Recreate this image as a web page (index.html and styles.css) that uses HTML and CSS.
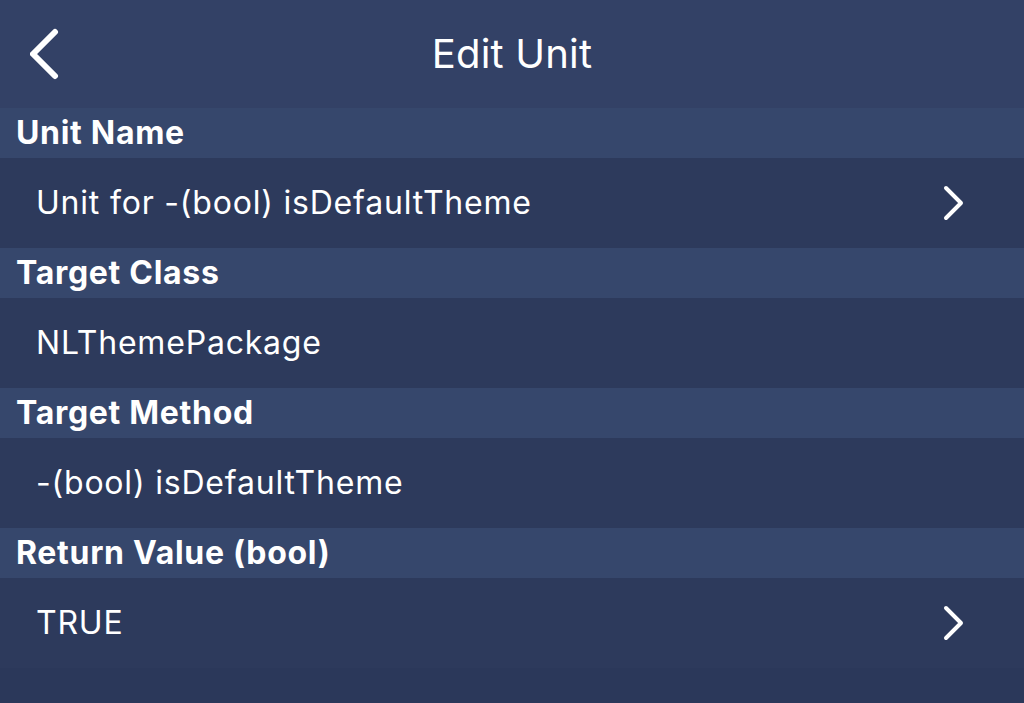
FILE: index.html
```html
<!DOCTYPE html>
<html>
<head>
<meta charset="utf-8">
<link rel="stylesheet" href="styles.css">
</head>
<body>
<div class="screen">
  <header class="nav">
    <svg class="back" width="40" height="60" viewBox="0 0 40 60"><path d="M25 4 L3 26 L25 48" fill="none" stroke="#fff" stroke-width="6" stroke-linecap="round" stroke-linejoin="round"/></svg>
    <h1 class="title">Edit Unit</h1>
  </header>
  <div class="section">Unit Name</div>
  <div class="row"><span>Unit for -(bool) isDefaultTheme</span>
    <svg class="chev" width="24" height="36" viewBox="0 0 24 36"><path d="M4 3 L19 18 L4 33" fill="none" stroke="#fff" stroke-width="4" stroke-linecap="round" stroke-linejoin="round"/></svg>
  </div>
  <div class="section">Target Class</div>
  <div class="row"><span>NLThemePackage</span></div>
  <div class="section">Target Method</div>
  <div class="row"><span>-(bool) isDefaultTheme</span></div>
  <div class="section">Return Value (bool)</div>
  <div class="row"><span>TRUE</span>
    <svg class="chev" width="24" height="36" viewBox="0 0 24 36"><path d="M4 3 L19 18 L4 33" fill="none" stroke="#fff" stroke-width="4" stroke-linecap="round" stroke-linejoin="round"/></svg>
  </div>
  <div class="rest"></div>
</div>
</body>
</html>
```
FILE: styles.css
```css
html, body {
  margin: 0;
  padding: 0;
  background: #2b385a;
}
.screen {
  width: 1024px;
  height: 703px;
  display: flex;
  flex-direction: column;
  font-family: Inter, "Liberation Sans", sans-serif;
  color: #fff;
  overflow: hidden;
}
.nav {
  height: 108px;
  flex: none;
  background: #334166;
  display: flex;
  align-items: center;
  justify-content: center;
  position: relative;
}
.back {
  position: absolute;
  left: 30px;
  top: 28px;
}
.title {
  margin: 0;
  font-weight: 400;
  font-size: 40px;
  letter-spacing: 0.2px;
  padding-bottom: 2px;
}
.section {
  height: 50px;
  flex: none;
  background: #36476c;
  display: flex;
  align-items: center;
  padding-left: 16px;
  font-weight: 700;
  font-size: 32px;
  letter-spacing: 0.7px;
  box-sizing: border-box;
  padding-bottom: 2px;
}
.row {
  height: 90px;
  flex: none;
  background: #2d3a5c;
  display: flex;
  align-items: center;
  justify-content: space-between;
  padding-left: 36px;
  padding-right: 58px;
  font-size: 32px;
  letter-spacing: 0.8px;
  box-sizing: border-box;
  padding-bottom: 2px;
}
.chev {
  flex: none;
  margin-top: 2px;
}
.rest {
  flex: 1;
  background: #2b385a;
}
```
